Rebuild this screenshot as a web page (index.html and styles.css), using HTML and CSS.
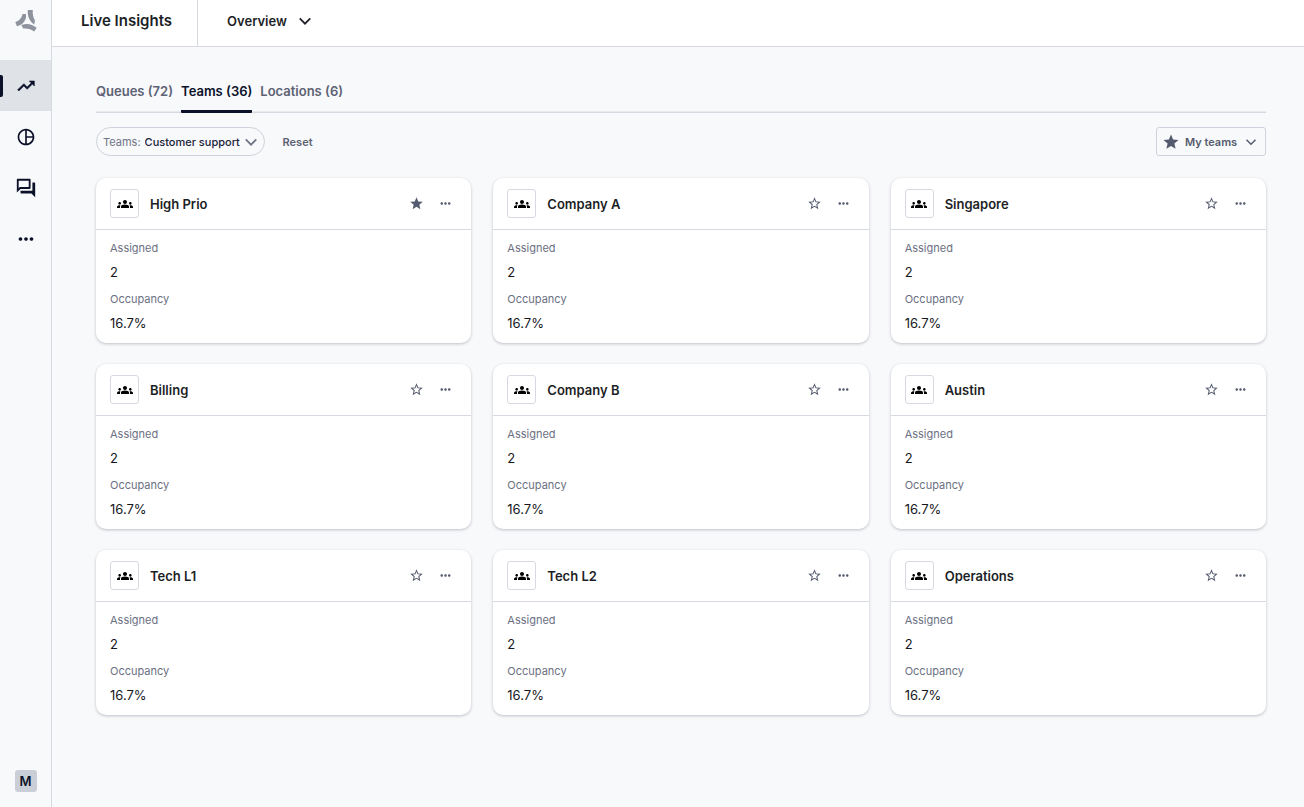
FILE: index.html
```html
<!DOCTYPE html>
<html lang="en">
<head>
  <meta charset="UTF-8">
  <title>Live Insights</title>
  <meta name="viewport" content="width=device-width, initial-scale=1.0">
  <link rel="stylesheet" href="styles.css">
</head>
<body>

  <svg class="sprite" aria-hidden="true">
    <symbol id="chevron" viewBox="0 0 12 12">
      <path d="M1.5 3.8 6 8.3l4.5-4.5" fill="none" stroke="currentColor" stroke-width="1.5"/>
    </symbol>
    <symbol id="star" viewBox="0 0 24 24">
      <path d="M12 17.27 18.18 21l-1.64-7.03L22 9.24l-7.19-.61L12 2 9.19 8.63 2 9.24l5.46 4.73L5.82 21z"/>
    </symbol>
    <symbol id="star-outline" viewBox="0 0 24 24">
      <path d="m22 9.24-7.19-.62L12 2 9.19 8.63 2 9.24l5.46 4.73L5.82 21 12 17.27 18.18 21l-1.63-7.03L22 9.24zM12 15.4l-3.76 2.27 1-4.28-3.32-2.88 4.38-.38L12 6.1l1.71 4.04 4.38.38-3.32 2.88 1 4.28L12 15.4z"/>
    </symbol>
    <symbol id="dots" viewBox="0 0 24 24">
      <path d="M6 10c-1.1 0-2 .9-2 2s.9 2 2 2 2-.9 2-2-.9-2-2-2zm12 0c-1.1 0-2 .9-2 2s.9 2 2 2 2-.9 2-2-.9-2-2-2zm-6 0c-1.1 0-2 .9-2 2s.9 2 2 2 2-.9 2-2-.9-2-2-2z"/>
    </symbol>
    <symbol id="group" viewBox="0 0 24 24">
      <path d="M12 12.75c1.63 0 3.07.39 4.24.9 1.08.48 1.76 1.56 1.76 2.73V18H6v-1.61c0-1.18.68-2.26 1.76-2.73 1.17-.52 2.61-.91 4.24-.91zM4 13c1.1 0 2-.9 2-2s-.9-2-2-2-2 .9-2 2 .9 2 2 2zm1.13 1.1c-.37-.06-.74-.1-1.13-.1-.99 0-1.93.21-2.78.58C.48 14.9 0 15.62 0 16.43V18h4.5v-1.61c0-.83.23-1.61.63-2.29zM20 13c1.1 0 2-.9 2-2s-.9-2-2-2-2 .9-2 2 .9 2 2 2zm4 3.43c0-.81-.48-1.53-1.22-1.85-.85-.37-1.79-.58-2.78-.58-.39 0-.76.04-1.13.1.4.68.63 1.46.63 2.29V18H24v-1.57zM12 6c1.66 0 3 1.34 3 3s-1.34 3-3 3-3-1.34-3-3 1.34-3 3-3z"/>
    </symbol>
  </svg>

  <div class="app">
    <aside class="sidebar">
      <a href="#" class="logo" aria-label="Home">
        <svg viewBox="0 0 22 24" width="22" height="24">
          <path d="M12.8 1h5c-.4 4.200.4 7.600 2.200 10.500L19.200 15.500C14.400 12.200 12.200 7.300 12.800 1z"/>
          <path d="M7.600 4.900h3.400v3.500C9.800 13 6.900 15.900 1.900 17.300L.3 13C4 11.700 6.500 9.200 7.600 4.900z"/>
          <path d="M6.300 15.900C11.800 13.900 17 14.900 21.700 18.700L19.200 22.500C15.900 20 12.300 19 8.200 19.500z"/>
        </svg>
      </a>
      <nav class="side-nav">
        <a href="#" class="side-link active" aria-label="Live insights">
          <svg viewBox="0 0 24 24" width="20" height="20"><path d="m16 6 2.290 2.290-4.880 4.880-4-4L2 16.590 3.410 18l6-6 4 4 6.300-6.290L22 12V6z" stroke="currentColor" stroke-width=".7"/></svg>
        </a>
        <a href="#" class="side-link" aria-label="Reports">
          <svg viewBox="0 0 24 24" width="20" height="20"><path d="M12 2C6.480 2 2 6.480 2 12s4.480 10 10 10 10-4.480 10-10S17.520 2 12 2zm1 2.070c3.610.45 6.480 3.330 6.930 6.930H13V4.070zM4 12c0-4.060 3.070-7.440 7-7.930v15.870c-3.930-.5-7-3.880-7-7.940zm9 7.930V13h6.930c-.45 3.610-3.320 6.480-6.930 6.930z"/></svg>
        </a>
        <a href="#" class="side-link" aria-label="Conversations">
          <svg viewBox="0 0 24 24" width="22" height="22"><path d="M15 4v7H5.170L4 12.170V4h11m1-2H3c-.55 0-1 .45-1 1v14l4-4h10c.55 0 1-.45 1-1V3c0-.55-.45-1-1-1zm5 4h-2v9H6v2c0 .55.45 1 1 1h11l4 4V7c0-.55-.45-1-1-1z"/></svg>
        </a>
        <a href="#" class="side-link" aria-label="More">
          <svg width="22" height="22"><use href="#dots"/></svg>
        </a>
      </nav>
      <button class="avatar">M</button>
    </aside>

    <div class="content">
      <header class="topbar">
        <h1>Live Insights</h1>
        <div class="dropdown view-picker">
          <select aria-label="View">
            <option>Overview</option>
          </select>
          <svg width="14" height="14"><use href="#chevron"/></svg>
        </div>
      </header>

      <main>
        <div class="tabs" role="tablist">
          <button class="tab" role="tab">Queues (72)</button>
          <button class="tab active" role="tab" aria-selected="true">Teams (36)</button>
          <button class="tab" role="tab">Locations (6)</button>
        </div>

        <div class="filters">
          <div class="dropdown team-filter">
            <label for="team">Teams:</label>
            <select id="team">
              <option>Customer support</option>
            </select>
            <svg width="14" height="14"><use href="#chevron"/></svg>
          </div>
          <button class="reset">Reset</button>
          <div class="dropdown my-teams">
            <svg width="18" height="18"><use href="#star"/></svg>
            <select aria-label="Saved teams">
              <option>My teams</option>
            </select>
            <svg width="12" height="12"><use href="#chevron"/></svg>
          </div>
        </div>

        <div class="cards" id="cards"></div>
      </main>
    </div>
  </div>

  <script>
    const teams = [
      { name: 'High Prio', starred: true },
      { name: 'Company A' },
      { name: 'Singapore' },
      { name: 'Billing' },
      { name: 'Company B' },
      { name: 'Austin' },
      { name: 'Tech L1' },
      { name: 'Tech L2' },
      { name: 'Operations' }
    ];

    document.getElementById('cards').innerHTML = teams.map(team => `
      <article class="card">
        <div class="card-head">
          <span class="card-icon"><svg width="16" height="16"><use href="#group"/></svg></span>
          <h2>${team.name}</h2>
          <button class="icon-btn" aria-label="Favorite ${team.name}">
            <svg width="15" height="15"><use href="#${team.starred ? 'star' : 'star-outline'}"/></svg>
          </button>
          <button class="icon-btn" aria-label="${team.name} options">
            <svg width="15" height="15"><use href="#dots"/></svg>
          </button>
        </div>
        <dl class="stats">
          <dt>Assigned</dt>
          <dd>2</dd>
          <dt>Occupancy</dt>
          <dd>16.7%</dd>
        </dl>
      </article>
    `).join('');
  </script>

</body>
</html>
```
FILE: styles.css
```css
* {
  box-sizing: border-box;
}

body {
  margin: 0;
  font-family: Inter, "Liberation Sans", sans-serif;
  font-size: 13px;
  color: #1d1f26;
  background: #f8f9fb;
}

h1, h2, dl, dd {
  margin: 0;
}

button, select {
  margin: 0;
  padding: 0;
  border: none;
  background: none;
  font: inherit;
  color: inherit;
  cursor: pointer;
}

select {
  appearance: none;
}

svg {
  display: block;
  flex: none;
  fill: currentColor;
}

.sprite {
  display: none;
}

.app {
  display: flex;
  min-height: 100vh;
}

/* sidebar */
.sidebar {
  width: 52px;
  flex: none;
  display: flex;
  flex-direction: column;
  align-items: center;
  padding: 9px 0 15px;
  border-right: 1px solid #d6d9e0;
}

.logo {
  color: #8f939d;
  margin-bottom: 27px;
}

.side-nav {
  width: 100%;
}

.side-link {
  display: flex;
  align-items: center;
  justify-content: center;
  height: 51px;
  color: #0b1129;
}

.side-link.active {
  position: relative;
  background: #dfe2e7;
}

.side-link.active::before {
  content: "";
  position: absolute;
  left: 0;
  width: 3px;
  height: 22px;
  border-radius: 0 2px 2px 0;
  background: #0b1129;
}

.avatar {
  width: 22px;
  height: 22px;
  margin-top: auto;
  border-radius: 3px;
  background: #caced6;
  color: #0b1129;
  font-size: 13px;
  font-weight: 600;
}

/* top bar */
.content {
  flex: 1;
  min-width: 0;
}

.topbar {
  display: flex;
  height: 47px;
  background: #fff;
  border-bottom: 1px solid #d6d9e0;
}

.topbar h1 {
  padding: 0 25px 0 29px;
  border-right: 1px solid #d6d9e0;
  font-size: 15px;
  font-weight: 600;
  line-height: 42px;
}

.dropdown {
  display: flex;
  align-items: center;
}

.view-picker {
  gap: 11px;
  height: 42px;
  padding-left: 29px;
  font-weight: 600;
}

/* tabs and filters */
main {
  padding: 32px 38px 32px 44px;
}

.tabs {
  display: flex;
  gap: 8px;
  border-bottom: 1px solid #d6d9e0;
  box-shadow: 0 -1px 0 #e9ebef inset;
}

.tab {
  height: 34px;
  margin-bottom: -1px;
  padding-bottom: 7px;
  border-bottom: 3px solid transparent;
  color: #5d6274;
  font-weight: 600;
}

.tab.active {
  border-color: #0b1129;
  border-radius: 1px;
  color: #0b1129;
}

.filters {
  display: flex;
  align-items: center;
  margin: 14px 0 22px;
  font-size: 11px;
}

.team-filter {
  height: 29px;
  padding: 0 6px;
  border: 1px solid #cfd2da;
  border-radius: 15px;
  color: #6f7486;
}

.team-filter select {
  margin: 0 3px 0 4px;
  color: #20243a;
  font-weight: 500;
}

.reset {
  margin-left: 18px;
  color: #5d6274;
  font-weight: 600;
}

.my-teams {
  height: 29px;
  margin-left: auto;
  padding: 0 8px 0 5px;
  border: 1px solid #cfd2da;
  border-radius: 3px;
  color: #555b6e;
  font-weight: 600;
}

.my-teams select {
  margin: 0 7px 0 5px;
}

/* team cards */
.cards {
  display: grid;
  grid-template-columns: repeat(3, 1fr);
  gap: 21px 22px;
}

.card {
  border-radius: 10px;
  background: #fff;
  box-shadow: 0 1px 3px rgba(20, 25, 45, 0.25);
}

.card-head {
  display: flex;
  align-items: center;
  height: 52px;
  padding: 0 15px 0 14px;
  border-bottom: 1px solid #d6d9e0;
}

.card-icon {
  display: flex;
  align-items: center;
  justify-content: center;
  width: 29px;
  height: 29px;
  border: 1px solid #d6d9e0;
  border-radius: 3px;
  color: #000;
}

.card-head h2 {
  flex: 1;
  margin-left: 11px;
  font-size: 13px;
  font-weight: 600;
}

.icon-btn {
  display: flex;
  align-items: center;
  justify-content: center;
  width: 21px;
  height: 24px;
  margin-left: 8px;
  color: #555b6e;
}

.stats {
  padding: 6px 14px 8px;
  line-height: 24px;
}

.stats dt {
  color: #6b7082;
  font-size: 11px;
}

.stats dd + dt {
  margin-top: 3px;
}

.stats dd {
  color: #15171c;
}

@media (max-width: 800px) {
  .cards {
    grid-template-columns: 1fr;
  }
}
```
